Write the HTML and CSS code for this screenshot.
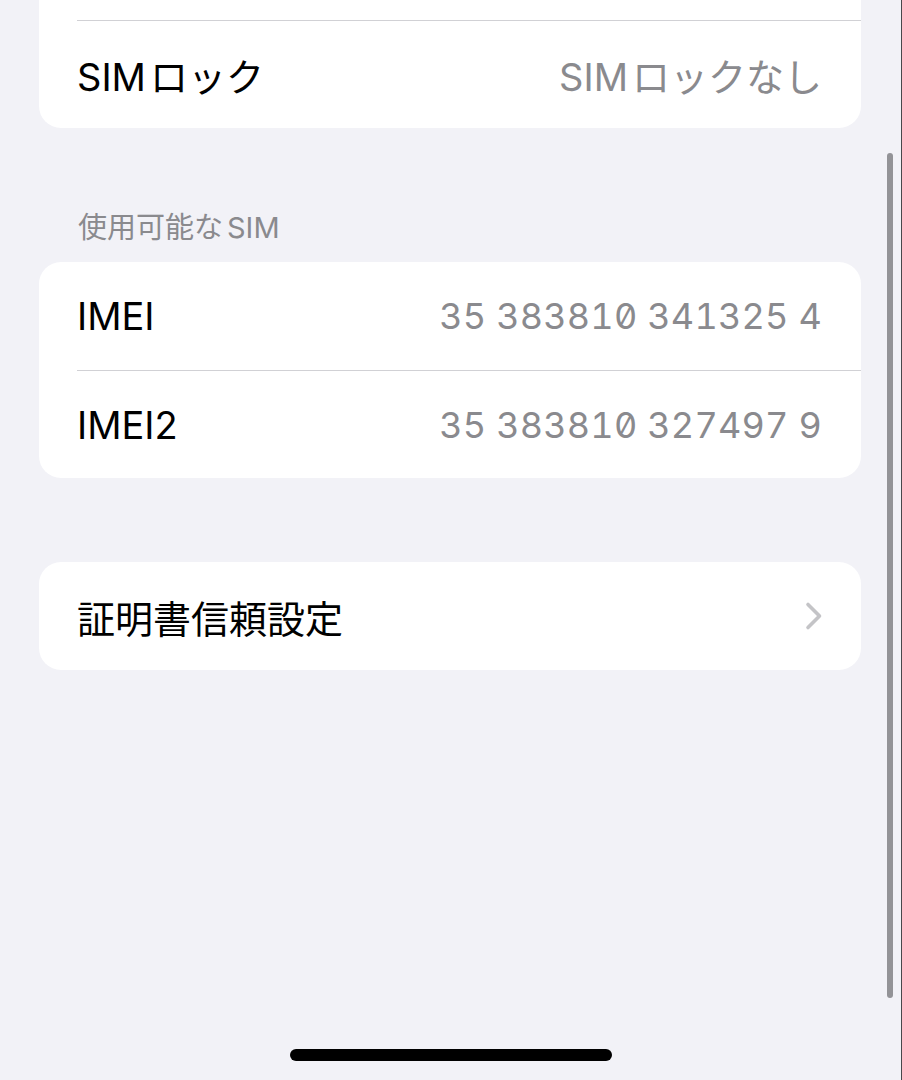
FILE: index.html
```html
<!DOCTYPE html>
<html lang="ja">
<head>
    <meta charset="UTF-8">
    <meta name="viewport" content="width=device-width, initial-scale=1.0">
    <title>情報</title>
    <link rel="stylesheet" href="styles.css">
</head>
<body>
    <div class="screen">
        <div class="group group-cut">
            <div class="row-stub"></div>
            <div class="row">
                <span class="label">SIM<span class="gap">ロック</span></span>
                <span class="value">SIM<span class="gap">ロックなし</span></span>
            </div>
        </div>

        <div class="section-title">使用可能な<span class="gap">SIM</span></div>
        <div class="group">
            <div class="row">
                <span class="label">IMEI</span>
                <span class="value digits">35 383810 341325 4</span>
            </div>
            <div class="row">
                <span class="label">IMEI2</span>
                <span class="value digits">35 383810 327497 9</span>
            </div>
        </div>

        <div class="group group-spaced">
            <div class="row">
                <span class="label">証明書信頼設定</span>
                <svg class="chevron" width="20" height="30" viewBox="0 0 20 30">
                    <path d="M4 3.5 L15.5 15 L4 26.5" fill="none" stroke="#c4c4c7" stroke-width="3.6" stroke-linecap="round" stroke-linejoin="round"/>
                </svg>
            </div>
        </div>

        <div class="scrollbar"></div>
        <div class="home-indicator"></div>
    </div>
</body>
</html>
```

FILE: styles.css
```css
body {
    margin: 0;
    background-color: #f2f2f7;
    font-family: Inter, "Noto Sans CJK JP", sans-serif;
}
.screen {
    position: relative;
    height: 1080px;
    padding: 0 40px 0 39px;
    border-right: 1px solid #48484c;
    box-sizing: border-box;
    overflow: hidden;
}
.group {
    background: #fff;
    border-radius: 22px;
    overflow: hidden;
}
.group-cut {
    border-top-left-radius: 0;
    border-top-right-radius: 0;
}
.group-spaced {
    margin-top: 84px;
}
.row-stub {
    height: 20px;
}
.row {
    height: 107px;
    display: flex;
    align-items: center;
    justify-content: space-between;
    padding-right: 39px;
    margin-left: 38px;
    border-top: 1px solid #d1d1d5;
}
.group .row:first-child {
    height: 108px;
    border-top: none;
}
.label {
    font-size: 38px;
    color: #000;
}
.value {
    font-size: 38px;
    color: #8a8a8e;
}
.gap {
    margin-left: 4px;
}
.digits {
    font-size: 36px;
    letter-spacing: 0.2px;
    font-feature-settings: "tnum", "zero";
}
.chevron {
    margin-right: -2px;
}
.section-title {
    font-size: 29px;
    color: #8a8a8e;
    padding: 81px 0 0 39px;
    height: 53px;
    line-height: 38px;
}
.scrollbar {
    position: absolute;
    left: 887px;
    top: 153px;
    width: 6px;
    height: 845px;
    border-radius: 3px;
    background: #939397;
}
.home-indicator {
    position: absolute;
    left: 290px;
    top: 1049px;
    width: 322px;
    height: 12px;
    border-radius: 6px;
    background: #000;
}
```
